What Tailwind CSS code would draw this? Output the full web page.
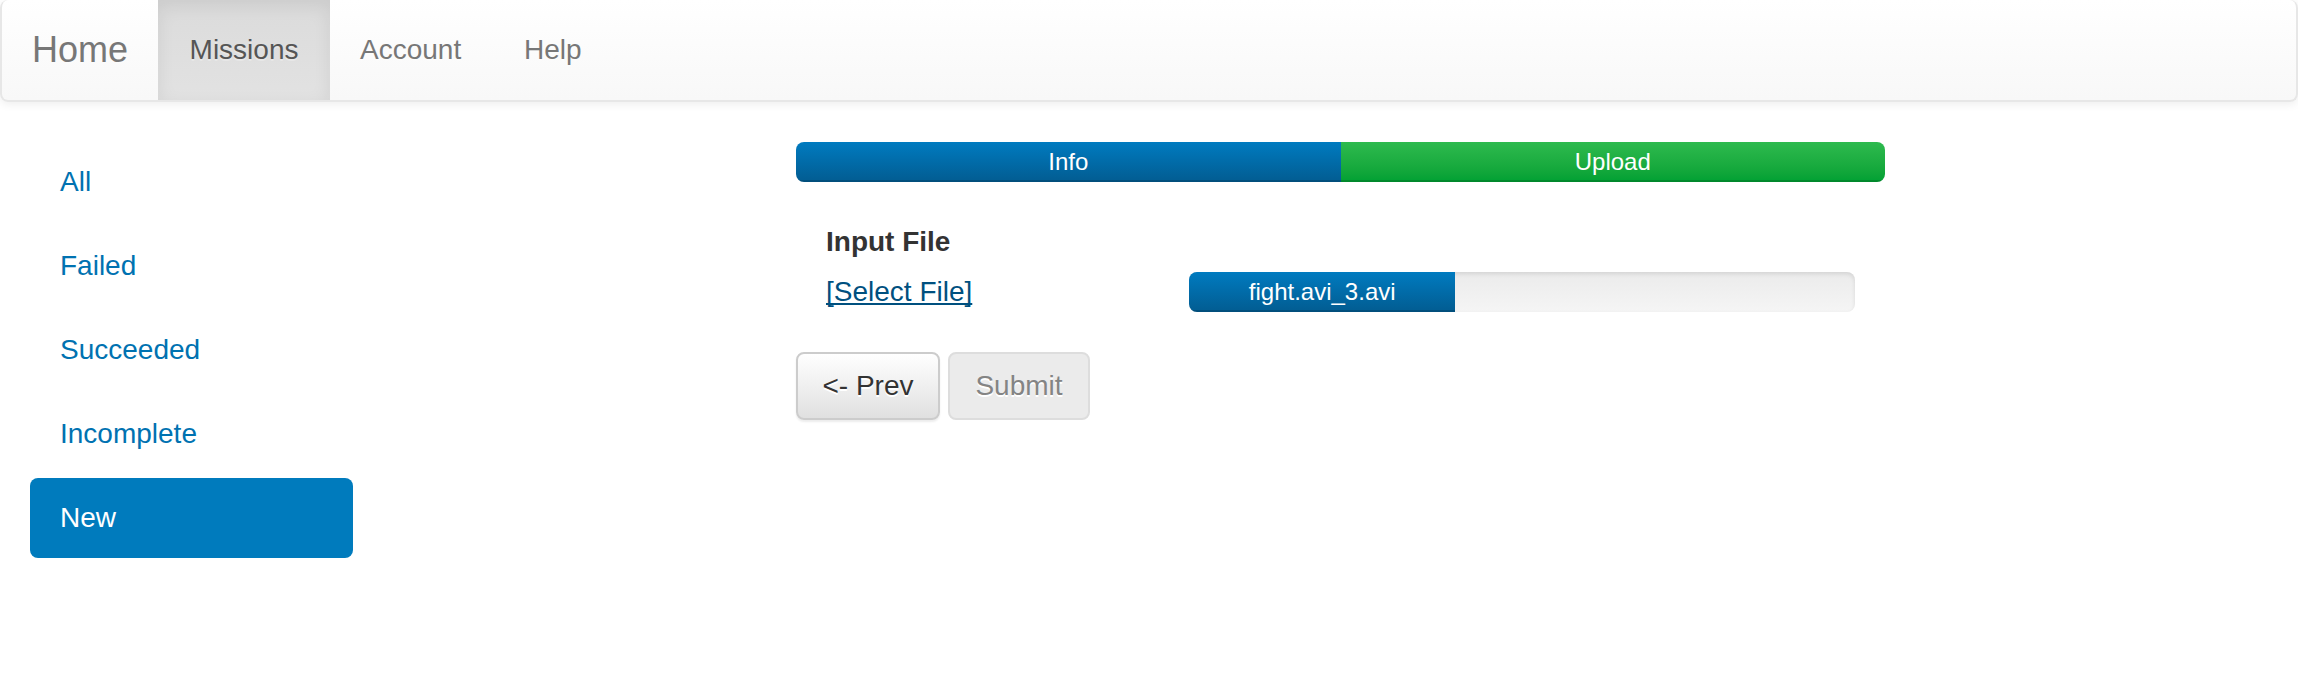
<!DOCTYPE html>
<html lang="en">
<head>
<meta charset="utf-8">
<meta name="viewport" content="width=device-width, initial-scale=1">
<title>Missions - New</title>
<script src="https://cdn.jsdelivr.net/npm/@tailwindcss/browser@4"></script>
</head>
<body class="bg-white font-['Liberation_Sans',Arial,sans-serif] text-[28px] leading-10 text-[#333333]">
<nav class="flex h-[102px] rounded-lg border-2 border-t-0 border-[#e7e7e7] bg-linear-to-b from-white to-[#f8f8f8] text-[#777777] shadow-[0_2px_10px_rgba(0,0,0,0.075)] [text-shadow:0_2px_0_rgba(255,255,255,0.25)]">
  <a href="#" class="flex items-center px-[30px] text-4xl leading-10">Home</a>
  <a href="#" aria-current="page" class="flex min-w-[172px] items-center justify-center bg-linear-to-b from-[#dbdbdb] to-[#e2e2e2] text-[#555555] shadow-[inset_0_6px_18px_rgba(0,0,0,0.075)]">Missions</a>
  <a href="#" class="flex min-w-[164px] items-center px-[30px]">Account</a>
  <a href="#" class="flex items-center px-[30px]">Help</a>
</nav>
<div class="grid grid-cols-12 pt-10">
  <aside class="col-span-2 px-[30px]">
    <ul class="flex flex-col gap-1 text-[#0072b1]">
      <li><a href="#" class="block rounded-lg px-[30px] py-5">All</a></li>
      <li><a href="#" class="block rounded-lg px-[30px] py-5">Failed</a></li>
      <li><a href="#" class="block rounded-lg px-[30px] py-5">Succeeded</a></li>
      <li><a href="#" class="block rounded-lg px-[30px] py-5">Incomplete</a></li>
      <li><a href="#" aria-current="page" class="block rounded-lg bg-[#007bbd] px-[30px] py-5 text-white">New</a></li>
    </ul>
  </aside>
  <main class="col-span-6 col-start-5 px-[30px]">
    <div class="mb-10 flex overflow-hidden rounded-lg text-center text-2xl leading-10 text-white">
      <div class="w-1/2 bg-linear-to-b from-[#007bc0] to-[#025c91] shadow-[inset_0_-2px_0_rgba(0,0,0,0.15)]">Info</div>
      <div class="w-1/2 bg-linear-to-b from-[#2dba4e] to-[#00a033] shadow-[inset_0_-2px_0_rgba(0,0,0,0.15)]">Upload</div>
    </div>
    <div class="mb-[10px] px-[30px] font-bold">Input File</div>
    <div class="mb-10 grid grid-cols-3">
      <div class="px-[30px]"><a href="#" class="text-[#00507f] underline decoration-2 underline-offset-2 [text-decoration-skip-ink:none]">[Select File]</a></div>
      <div class="col-span-2 px-[30px]">
        <div class="overflow-hidden rounded-lg bg-linear-to-b from-[#ebebeb] to-[#f5f5f5] shadow-[inset_0_2px_4px_rgba(0,0,0,0.1)]">
          <div role="progressbar" aria-label="fight.avi_3.avi" aria-valuenow="40" aria-valuemin="0" aria-valuemax="100" class="bg-linear-to-b from-[#007bc0] to-[#025c91] text-center text-2xl leading-10 text-white shadow-[inset_0_-2px_0_rgba(0,0,0,0.15)]" style="width:40%">fight.avi_3.avi</div>
        </div>
      </div>
    </div>
    <div class="flex gap-2">
      <button type="button" class="min-w-[144px] rounded-lg border-2 border-[#cccccc] bg-linear-to-b from-white to-[#e0e0e0] py-3 shadow-[inset_0_2px_0_rgba(255,255,255,0.15),0_2px_2px_rgba(0,0,0,0.075)] [text-shadow:0_2px_0_#ffffff]">&lt;- Prev</button>
      <button type="button" disabled class="min-w-[142px] rounded-lg border-2 border-[#dddddd] bg-[#ebebeb] py-3 text-[#848484] [text-shadow:0_2px_0_#ffffff]">Submit</button>
    </div>
  </main>
</div>
</body>
</html>
